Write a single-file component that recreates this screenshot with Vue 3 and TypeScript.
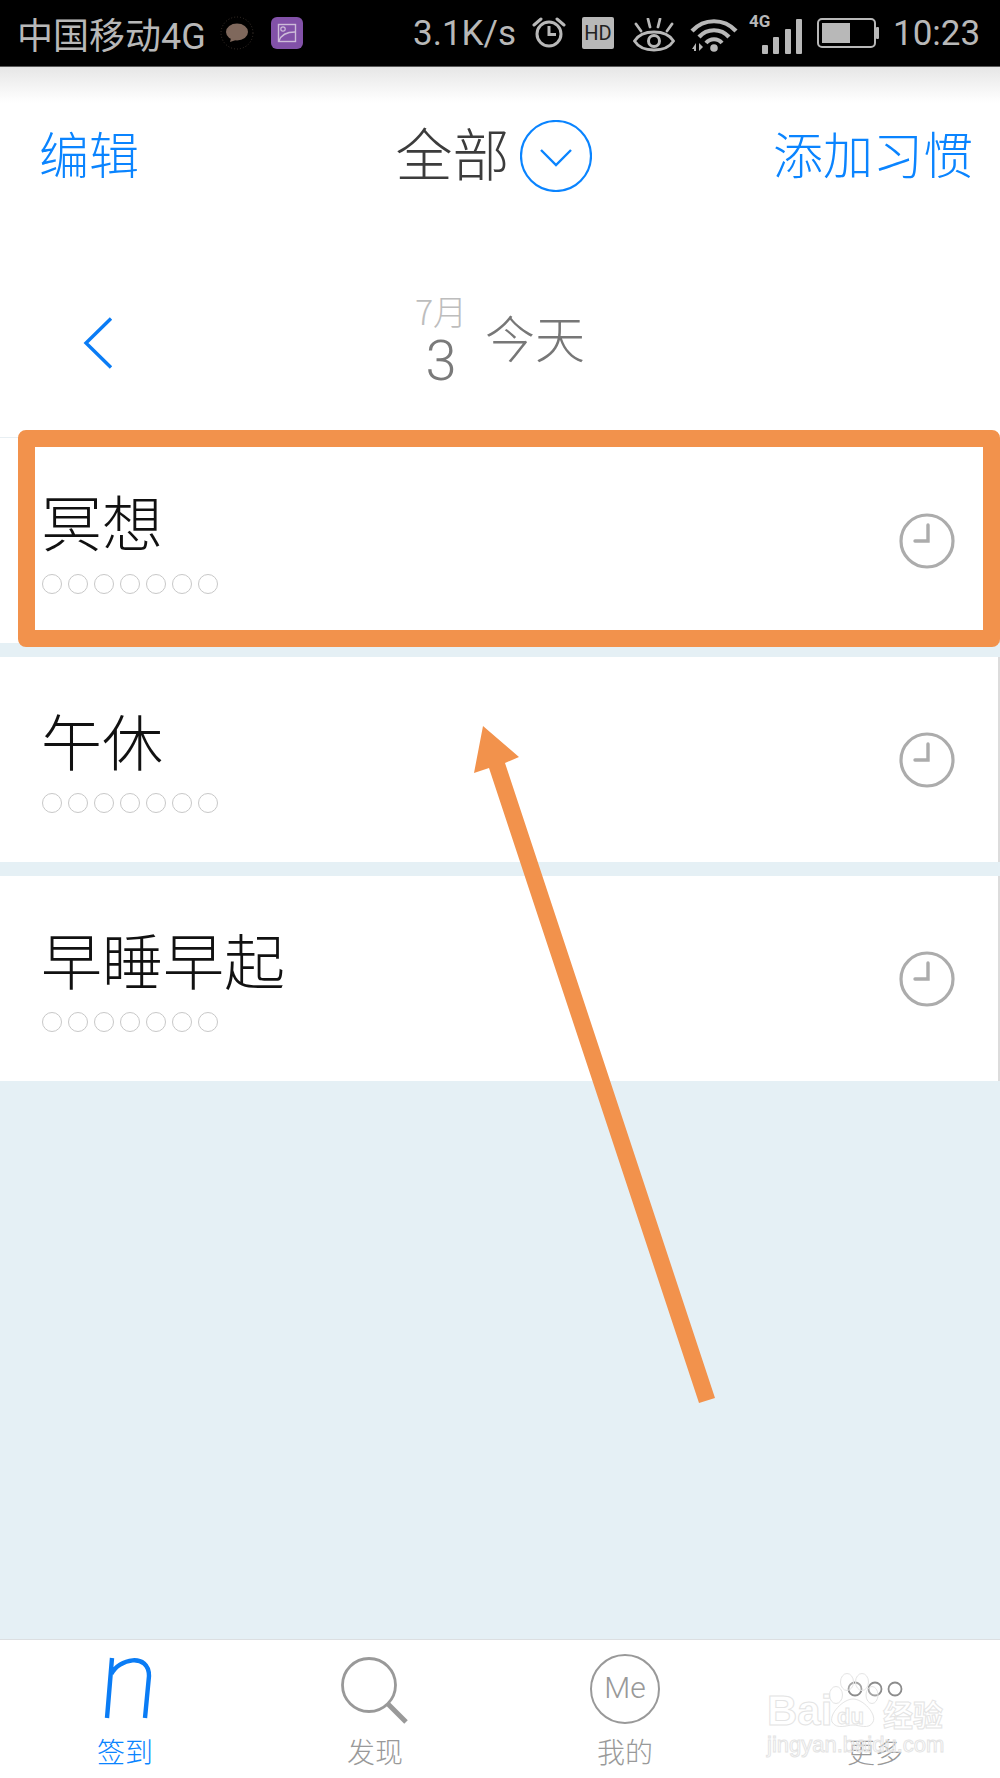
<template>
  <div class="phone">
    <div class="status-bar">
      <span class="carrier">中国移动4G</span>
      <svg class="ic-bubble" width="34" height="34" viewBox="0 0 34 34">
        <circle cx="17" cy="17" r="16" fill="none" stroke="#3a302a" stroke-width="1" stroke-dasharray="1 2" />
        <ellipse cx="17" cy="16" rx="11" ry="8.5" fill="#7f685c" />
        <path d="M11 22 L10 26 L16 24 Z" fill="#7f685c" />
      </svg>
      <svg class="ic-gallery" width="32" height="32" viewBox="0 0 32 32">
        <rect width="32" height="32" rx="6" fill="#8251a8" />
        <rect x="7.5" y="7.5" width="17" height="17" fill="none" stroke="#cdbbd9" stroke-width="1.4" />
        <circle cx="12" cy="12" r="2.2" fill="none" stroke="#cdbbd9" stroke-width="1.2" />
        <path d="M8 24 C10 18 15 15 24 15" fill="none" stroke="#cdbbd9" stroke-width="1.4" />
      </svg>
      <span class="speed">3.1K/s</span>
      <svg class="ic-alarm" width="34" height="34" viewBox="0 0 34 34">
        <circle cx="17" cy="18" r="12" fill="none" stroke="#b8b8b8" stroke-width="3" />
        <path d="M17 10 V18.5 H24" fill="none" stroke="#b8b8b8" stroke-width="3" />
        <path d="M2 9 L9 3 M32 9 L25 3" stroke="#b8b8b8" stroke-width="3" stroke-linecap="round" />
      </svg>
      <span class="hd">HD</span>
      <svg class="ic-eye" width="42" height="36" viewBox="0 0 42 36">
        <path d="M1.5 23 C9 11 33 11 40.5 23 C33 35 9 35 1.5 23 Z" fill="none" stroke="#b8b8b8" stroke-width="2.8" />
        <circle cx="21" cy="23" r="5.5" fill="none" stroke="#b8b8b8" stroke-width="3" />
        <path d="M3 6 L8 13 M15 1 L17 9 M27 1 L25 9 M39 6 L34 13" stroke="#b8b8b8" stroke-width="2.8" stroke-linecap="round" />
      </svg>
      <svg class="ic-wifi" width="48" height="36" viewBox="0 0 48 36">
        <path d="M2 15 C14 2 34 2 46 15" fill="none" stroke="#b8b8b8" stroke-width="4.2" />
        <path d="M9 21 C17 12 31 12 39 21" fill="none" stroke="#b8b8b8" stroke-width="4.2" />
        <path d="M16 27 C20 22 28 22 32 27" fill="none" stroke="#b8b8b8" stroke-width="4" />
        <circle cx="24" cy="32" r="3.8" fill="#b8b8b8" />
        <path d="M2 33 L6 27 V35 H4 V33 Z M9 27 L13 31 L9 35 Z" fill="#b8b8b8" />
      </svg>
      <svg class="ic-signal" width="54" height="48" viewBox="0 -8 54 48">
        <text x="0" y="13" class="sig-text">4G</text>
        <rect x="13" y="31" width="6" height="9" rx="1" fill="#b8b8b8" />
        <rect x="24" y="23" width="6" height="17" rx="1" fill="#b8b8b8" />
        <rect x="36" y="15" width="6" height="25" rx="1" fill="#b8b8b8" />
        <rect x="47" y="5" width="6" height="35" rx="1" fill="#b8b8b8" />
      </svg>
      <svg class="ic-battery" width="62" height="30" viewBox="0 0 62 30">
        <rect x="1" y="1" width="57" height="28" rx="4" fill="none" stroke="#b8b8b8" stroke-width="2" />
        <rect x="5" y="5" width="28" height="20" fill="#b8b8b8" />
        <rect x="59" y="9" width="3" height="12" rx="1" fill="#b8b8b8" />
      </svg>
      <span class="clock-text">10:23</span>
    </div>

    <header class="top-nav">
      <span class="nav-link">编辑</span>
      <div class="nav-title">
        <span>全部</span>
        <svg width="72" height="72" viewBox="0 0 72 72">
          <circle cx="36" cy="36" r="35" fill="none" stroke="#0a84ff" stroke-width="2.2" />
          <path d="M21 30 L36 45 L51 30" fill="none" stroke="#0a84ff" stroke-width="2.4" />
        </svg>
      </div>
      <span class="nav-link">添加习惯</span>
    </header>

    <div class="date-row">
      <svg class="back" width="30" height="52" viewBox="0 0 30 52">
        <path d="M28 1.5 L3 26 L28 50.5" fill="none" stroke="#0a7cf5" stroke-width="3.4" />
      </svg>
      <div class="date-box">
        <span class="month">7月</span>
        <span class="day">3</span>
      </div>
      <span class="today">今天</span>
    </div>

    <ul class="habit-list">
      <li v-for="h in habits" :key="h" class="habit">
        <div class="habit-main">
          <div class="habit-name">{{ h }}</div>
          <div class="week">
            <i v-for="n in 7" :key="n" class="dot"></i>
          </div>
        </div>
        <svg class="habit-clock" width="56" height="56" viewBox="0 0 56 56">
          <circle cx="28" cy="28" r="26" fill="none" stroke="#acacac" stroke-width="3.2" />
          <path d="M29 12 V28 H16" fill="none" stroke="#acacac" stroke-width="3.4" stroke-linecap="round" />
        </svg>
      </li>
    </ul>

    <div class="spacer"></div>

    <nav class="tab-bar">
      <div class="tab active">
        <svg width="60" height="68" viewBox="0 0 60 68">
          <path d="M8 64 L13 4 M12.5 20 C19 5 50 -2 50 22 L46 64" fill="none" stroke="#0a7cf5" stroke-width="4.4" />
        </svg>
        <span>签到</span>
      </div>
      <div class="tab">
        <svg width="68" height="68" viewBox="0 0 68 68">
          <circle cx="28" cy="28" r="26.5" fill="none" stroke="#999" stroke-width="2.8" />
          <path d="M47 47 L65 65" stroke="#999" stroke-width="5" />
        </svg>
        <span>发现</span>
      </div>
      <div class="tab">
        <div class="me-icon">Me</div>
        <span>我的</span>
      </div>
      <div class="tab">
        <svg width="68" height="68" viewBox="0 0 68 68">
          <circle cx="14" cy="35" r="6.5" fill="none" stroke="#8c8c8c" stroke-width="1.8" />
          <circle cx="34" cy="35" r="6.5" fill="none" stroke="#8c8c8c" stroke-width="1.8" />
          <circle cx="54" cy="35" r="6.5" fill="none" stroke="#8c8c8c" stroke-width="1.8" />
        </svg>
        <span>更多</span>
      </div>
    </nav>

    <!-- annotation drawn over the screenshot -->
    <div class="highlight"></div>
    <svg class="arrow" width="1000" height="1778" viewBox="0 0 1000 1778">
      <polygon points="483,726 519,757 505,763 715,1398 699,1403 489,768 474,773" fill="#f2924c" />
    </svg>

    <div class="watermark">
      <svg class="paw" width="52" height="58" viewBox="0 0 52 58">
        <ellipse cx="9" cy="23" rx="6.5" ry="8.5" />
        <ellipse cx="20" cy="10" rx="6.5" ry="8.5" />
        <ellipse cx="35" cy="10" rx="6.5" ry="8.5" />
        <ellipse cx="45" cy="23" rx="6" ry="8.5" />
        <path d="M26 27 C36 27 50 42 46 50 C42 58 32 53 26 53 C20 53 10 58 5 50 C2 42 16 27 26 27 Z" />
      </svg>
      <span class="wm-bai">Bai</span>
      <span class="wm-du">du</span>
      <span class="wm-jy">经验</span>
      <span class="wm-url">jingyan.baidu.com</span>
    </div>
  </div>
</template>

<script setup lang="ts">
const habits: string[] = ['冥想', '午休', '早睡早起'];
</script>

<style>
body {
  margin: 0;
}
</style>

<style scoped>
.phone {
  position: relative;
  display: flex;
  flex-direction: column;
  width: 1000px;
  height: 1778px;
  overflow: hidden;
  background: #e5f0f5;
  font-family: "Noto Sans CJK SC", "Liberation Sans", sans-serif;
  font-weight: 300;
}

.status-bar {
  display: flex;
  align-items: center;
  flex: none;
  box-sizing: border-box;
  height: 67px;
  padding: 0 18px;
  background: #000;
  border-bottom: 1px solid #5a5a5a;
  color: #b8b8b8;
  font-family: Roboto, "Noto Sans CJK SC", sans-serif;
  font-size: 35px;
  font-weight: 400;
}

.carrier {
  width: 187px;
  margin-left: -1px;
  margin-right: 1px;
  white-space: nowrap;
  font-size: 36px;
}

.ic-bubble { margin-left: 15px; }
.ic-gallery { margin-left: 17px; }
.speed { margin-left: 110px; width: 104px; white-space: nowrap; }
.ic-alarm { margin-left: 15px; }
.hd {
  width: 32px;
  height: 32px;
  margin-left: 16px;
  border-radius: 2px;
  background: #b8b8b8;
  color: #222;
  font-size: 20px;
  line-height: 33px;
  text-align: center;
}
.ic-eye { margin-left: 19px; margin-top: 6px; }
.ic-wifi { margin-left: 15px; margin-top: 2px; }
.ic-signal { margin-left: 11px; margin-top: -6px; }
.sig-text {
  fill: #b8b8b8;
  font-family: Roboto, sans-serif;
  font-size: 17px;
  font-weight: 700;
}
.ic-battery { margin-left: 14px; }
.clock-text { margin-left: 14px; }

.top-nav {
  display: flex;
  align-items: center;
  justify-content: space-between;
  flex: none;
  height: 178px;
  padding: 0 27px 0 39px;
  background: linear-gradient(#e6e6e6 0, #fafafa 28px, #fff 36px);
}

.nav-link {
  color: #0a84ff;
  font-size: 50px;
  margin-top: -9px;
}

.nav-title {
  display: flex;
  align-items: center;
  gap: 10px;
  margin-left: 75px;
  color: #3c3c3c;
  font-size: 57px;
}

.nav-title span {
  margin-top: -11px;
}

.date-row {
  display: flex;
  align-items: center;
  flex: none;
  height: 192px;
  background: #fff;
}

.back {
  margin-left: 83px;
  margin-top: 3px;
}

.date-box {
  display: flex;
  flex-direction: column;
  align-items: center;
  width: 60px;
  margin-left: 298px;
  margin-top: -3px;
}

.month {
  margin-bottom: 8px;
  color: #bdbdbd;
  font-size: 34px;
  line-height: 34px;
}

.day {
  color: #7a7a7a;
  font-family: Roboto, sans-serif;
  font-size: 56px;
  font-weight: 300;
  line-height: 50px;
}

.today {
  margin-left: 14px;
  color: #777;
  font-size: 50px;
  margin-top: -10px;
}

.habit-list {
  display: flex;
  flex-direction: column;
  gap: 14px;
  flex: none;
  margin: 0;
  padding: 0;
  border-top: 1px solid #e8eff3;
  list-style: none;
}

.habit {
  display: flex;
  align-items: center;
  justify-content: space-between;
  box-sizing: border-box;
  height: 205px;
  padding: 0 0 0 42px;
  background: #fff;
  border-right: 2px solid #dcdcdc;
}

.habit-name {
  margin-left: -1px;
  color: #111;
  font-size: 61px;
  line-height: 66px;
}

.week {
  display: flex;
  gap: 6px;
  margin-top: 20px;
}

.dot {
  box-sizing: border-box;
  width: 20px;
  height: 20px;
  border: 1px solid #c8c8c8;
  border-radius: 50%;
}

.habit-clock {
  margin-right: 43px;
}

.spacer {
  flex: 1;
}

.tab-bar {
  display: grid;
  grid-template-columns: repeat(4, 1fr);
  flex: none;
  height: 139px;
  box-sizing: border-box;
  padding-top: 14px;
  background: #fff;
  border-top: 1px solid #dcdfe1;
}

.tab {
  display: flex;
  flex-direction: column;
  align-items: center;
  color: #999;
  font-size: 28px;
  line-height: 40px;
}

.tab svg,
.me-icon {
  flex: none;
  height: 68px;
  margin-bottom: 9px;
}

.tab.active {
  color: #0a84ff;
}

.tab.active svg {
  margin-left: 8px;
}

.tab:nth-child(2) svg {
  margin-top: 3px;
  margin-bottom: 6px;
}

.me-icon {
  box-sizing: border-box;
  width: 70px;
  height: 70px;
  margin-bottom: 7px;
  border: 2.5px solid #999;
  border-radius: 50%;
  color: #999;
  font-family: Roboto, sans-serif;
  font-size: 30px;
  font-weight: 300;
  line-height: 64px;
  text-align: center;
}

.highlight {
  position: absolute;
  left: 18px;
  top: 430px;
  box-sizing: border-box;
  width: 982px;
  height: 217px;
  border: 17px solid #f2924c;
  border-radius: 8px;
}

.arrow {
  position: absolute;
  left: 0;
  top: 0;
}

.watermark {
  position: absolute;
  left: 767px;
  top: 1672px;
  width: 180px;
  height: 86px;
  color: transparent;
  font-family: "Liberation Sans", sans-serif;
  font-weight: 700;
  -webkit-text-stroke: 1px #e4e4e4;
}

.paw {
  position: absolute;
  left: 60px;
  top: 0;
  fill: rgba(255, 255, 255, 0.2);
  stroke: #e4e4e4;
  stroke-width: 1;
}

.wm-bai {
  position: absolute;
  left: 0;
  top: 15px;
  font-size: 42px;
  line-height: 48px;
}

.wm-du {
  position: absolute;
  left: 70px;
  top: 32px;
  font-size: 22px;
  line-height: 26px;
}

.wm-jy {
  position: absolute;
  left: 116px;
  top: 22px;
  font-family: "Noto Sans CJK SC", sans-serif;
  font-size: 30px;
  line-height: 38px;
}

.wm-url {
  position: absolute;
  left: 0;
  top: 60px;
  font-size: 22px;
  line-height: 26px;
  font-weight: 400;
  white-space: nowrap;
}
</style>
